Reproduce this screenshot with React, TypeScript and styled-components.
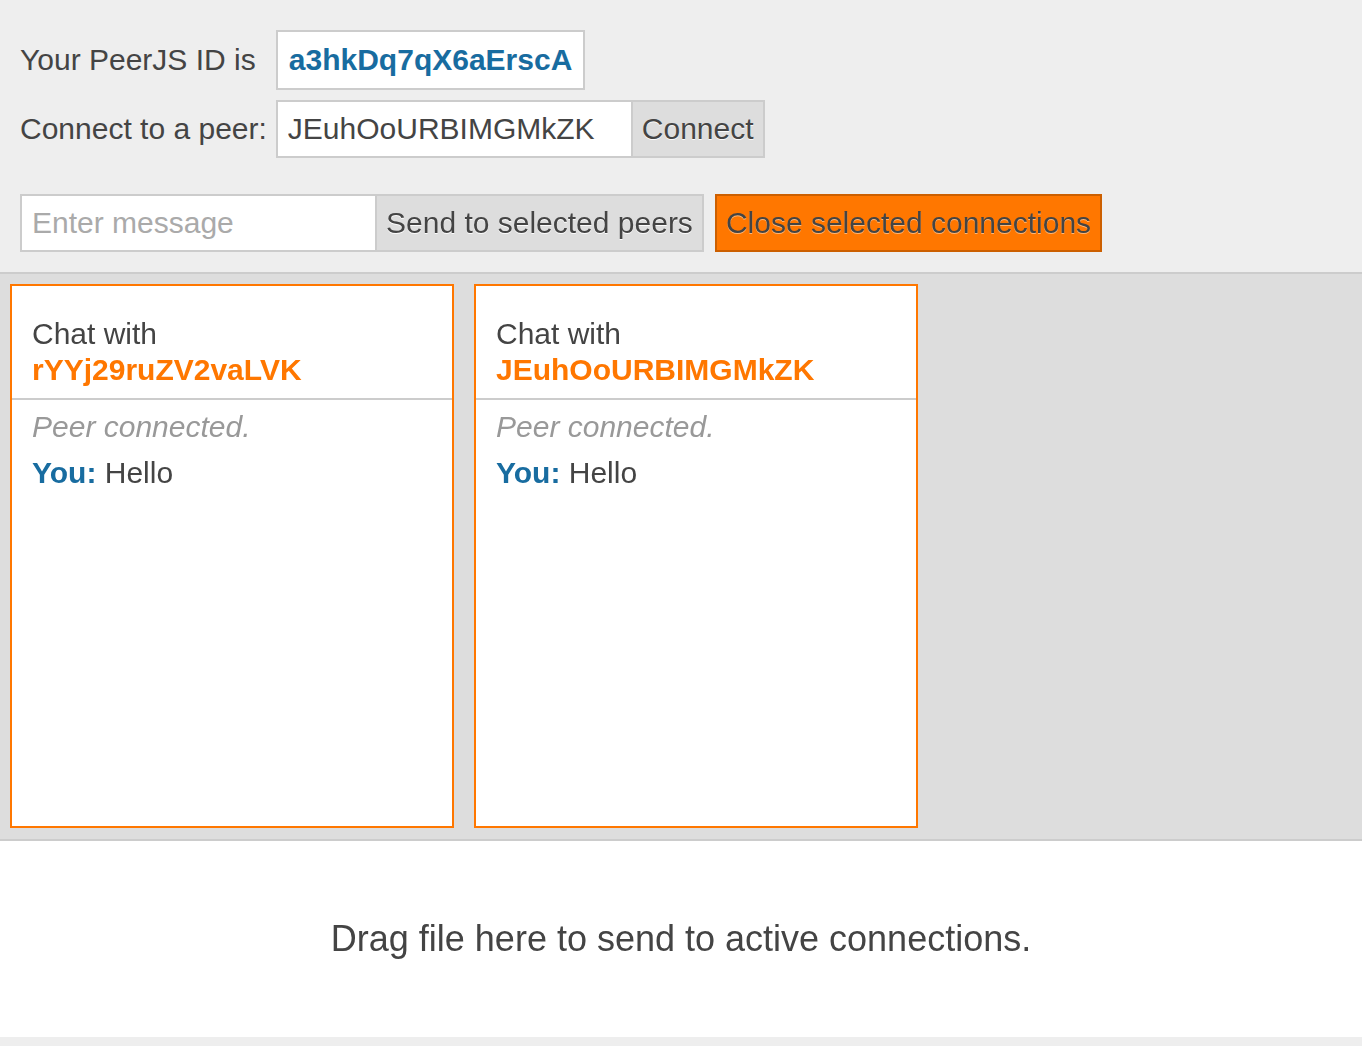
import React from "react";
import styled, { createGlobalStyle } from "styled-components";

const GlobalStyle = createGlobalStyle`
  html, body {
    margin: 0;
    padding: 0;
    background: #eeeeee;
    font-family: "Liberation Sans", Arial, Helvetica, sans-serif;
    color: #444444;
  }
  * { box-sizing: border-box; }
`;

const Page = styled.div`
  width: 1362px;
  min-height: 1046px;
  background: #eeeeee;
`;

const Header = styled.div`
  padding: 30px 20px 20px 20px;
  font-size: 30px;
  line-height: 36px;
`;

const IdGrid = styled.div`
  display: grid;
  grid-template-columns: auto auto;
  justify-content: start;
  column-gap: 9px;
  row-gap: 10px;
  align-items: center;
`;

const Label = styled.span`
  white-space: nowrap;
`;

const IdBox = styled.span`
  justify-self: start;
  display: inline-flex;
  align-items: center;
  height: 60px;
  padding: 0 11px;
  background: #ffffff;
  border: 2px solid #cccccc;
  color: #186ca0;
  font-weight: bold;
`;

const Group = styled.div`
  display: flex;
  align-items: stretch;
`;

const Field = styled.input<{ $width: number }>`
  width: ${(p) => p.$width}px;
  height: 58px;
  padding: 0 10px;
  margin: 0;
  border: 2px solid #cccccc;
  border-right: none;
  background: #ffffff;
  font-family: "Liberation Sans", Arial, sans-serif;
  font-size: 30px;
  color: #444444;
  outline: none;
  caret-color: #444444;
  &::placeholder {
    color: #aaaaaa;
  }
`;

const Button = styled.button<{ $primary?: boolean }>`
  height: 58px;
  margin: 0;
  padding: 0 9px;
  border: 2px solid ${(p) => (p.$primary ? "#cc5f00" : "#cccccc")};
  background: ${(p) => (p.$primary ? "#ff7700" : "#dddddd")};
  color: #444444;
  font-family: "Liberation Sans", Arial, sans-serif;
  font-size: 30px;
  text-shadow: 0 1px 0 ${(p) => (p.$primary ? "rgba(255,200,150,0.8)" : "rgba(255,255,255,0.9)")};
  cursor: pointer;
  white-space: nowrap;
`;

const MessageRow = styled.div`
  display: flex;
  align-items: center;
  gap: 11px;
  margin-top: 36px;
`;

const ChatArea = styled.div`
  background: #dddddd;
  border-top: 2px solid #cccccc;
  border-bottom: 2px solid #cccccc;
  padding: 10px 10px 11px 10px;
  display: flex;
  gap: 20px;
`;

const ChatBox = styled.div`
  width: 444px;
  height: 544px;
  background: #ffffff;
  border: 2px solid #ff7700;
  display: flex;
  flex-direction: column;
`;

const ChatHeader = styled.div`
  padding: 30px 20px 10px 20px;
  border-bottom: 2px solid #cccccc;
  font-size: 30px;
  line-height: 36px;
`;

const PeerName = styled.div`
  color: #ff7700;
  font-weight: bold;
`;

const Messages = styled.div`
  padding: 9px 20px;
  font-size: 30px;
  line-height: 36px;
`;

const Message = styled.div<{ $system?: boolean }>`
  margin-bottom: 10px;
  color: ${(p) => (p.$system ? "#999999" : "#444444")};
  font-style: ${(p) => (p.$system ? "italic" : "normal")};
`;

const Sender = styled.span`
  color: #186ca0;
  font-weight: bold;
`;

const DropZone = styled.div`
  height: 196px;
  background: #ffffff;
  display: flex;
  align-items: center;
  justify-content: center;
  font-size: 36px;
  color: #444444;
`;

const chats = ["rYYj29ruZV2vaLVK", "JEuhOoURBIMGMkZK"];

export default function App() {
  return (
    <Page>
      <GlobalStyle />
      <Header>
        <IdGrid>
          <Label>Your PeerJS ID is</Label>
          <IdBox>a3hkDq7qX6aErscA</IdBox>
          <Label>Connect to a peer:</Label>
          <Group>
            <Field $width={355} defaultValue="JEuhOoURBIMGMkZK" />
            <Button>Connect</Button>
          </Group>
        </IdGrid>
        <MessageRow>
          <Group>
            <Field $width={355} placeholder="Enter message" autoFocus />
            <Button>Send to selected peers</Button>
          </Group>
          <Button $primary>Close selected connections</Button>
        </MessageRow>
      </Header>
      <ChatArea>
        {chats.map((peer) => (
          <ChatBox key={peer}>
            <ChatHeader>
              Chat with
              <PeerName>{peer}</PeerName>
            </ChatHeader>
            <Messages>
              <Message $system>Peer connected.</Message>
              <Message>
                <Sender>You:</Sender> Hello
              </Message>
            </Messages>
          </ChatBox>
        ))}
      </ChatArea>
      <DropZone>Drag file here to send to active connections.</DropZone>
    </Page>
  );
}
